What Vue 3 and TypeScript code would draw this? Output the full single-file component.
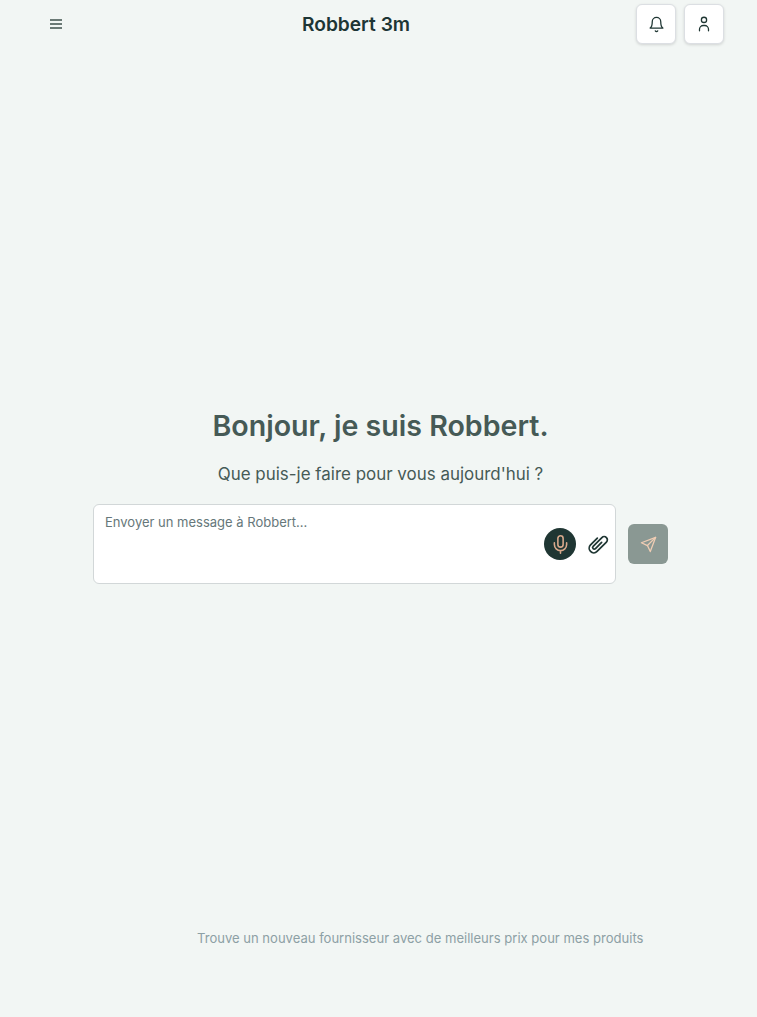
<script setup lang="ts">
defineOptions({
  name: 'ChatHome',
})

const title = 'Robbert 3m'
const suggestion = 'Trouve un nouveau fournisseur avec de meilleurs prix pour mes produits'
</script>

<template>
  <div class="page">
    <header class="topbar">
      <button class="menu-btn" type="button" aria-label="Menu">
        <svg width="16" height="16" viewBox="0 0 16 16" fill="none" stroke="#6b7a76" stroke-width="2">
          <path d="M2 4h12M2 8h12M2 12h12" />
        </svg>
      </button>
      <h1 class="brand">{{ title }}</h1>
      <div class="actions">
        <button class="icon-btn" type="button" aria-label="Notifications">
          <svg width="17" height="17" viewBox="0 0 24 24" fill="none" stroke="#1f3633" stroke-width="1.8" stroke-linecap="round" stroke-linejoin="round">
            <path d="M6 8a6 6 0 0 1 12 0c0 7 3 9 3 9H3s3-2 3-9" />
            <path d="M10.3 21a2 2 0 0 0 3.4 0" />
          </svg>
        </button>
        <button class="icon-btn" type="button" aria-label="Compte">
          <svg width="18" height="18" viewBox="0 0 24 24" fill="none" stroke="#1f3633" stroke-width="1.7" stroke-linecap="round" stroke-linejoin="round">
            <circle cx="12" cy="6.5" r="3.5" />
            <path d="M6 21v-2a5 5 0 0 1 5-5h2a5 5 0 0 1 5 5v2" />
          </svg>
        </button>
      </div>
    </header>

    <main class="hero">
      <h2 class="hello">Bonjour, je suis Robbert.</h2>
      <p class="sub">Que puis-je faire pour vous aujourd'hui ?</p>
      <div class="composer">
        <div class="input-box">
          <span class="placeholder">Envoyer un message à Robbert...</span>
          <div class="input-tools">
            <button class="mic-btn" type="button" aria-label="Micro">
              <svg width="21" height="21" viewBox="0 0 24 24" fill="none" stroke="#d9a98c" stroke-width="1.8" stroke-linecap="round" stroke-linejoin="round">
                <rect x="9" y="2" width="6" height="13" rx="3" />
                <path d="M19 10v2a7 7 0 0 1-14 0v-2M12 19v3" />
              </svg>
            </button>
            <button class="clip-btn" type="button" aria-label="Joindre">
              <svg width="22" height="22" viewBox="0 0 24 24" fill="none" stroke="#1f3633" stroke-width="1.9" stroke-linecap="round" stroke-linejoin="round">
                <path transform="rotate(45 12 12)" d="M7 8V18.5a5 5 0 0 0 10 0V4a3.5 3.5 0 0 0-7 0V17.5a1.8 1.8 0 0 0 3.6 0V8" />
              </svg>
            </button>
          </div>
        </div>
        <button class="send-btn" type="button" aria-label="Envoyer">
          <svg width="17" height="17" viewBox="0 0 24 24" fill="none" stroke="#f0cdb4" stroke-width="1.8" stroke-linecap="round" stroke-linejoin="round">
            <path d="M22 2 2 9.5l8.5 4L14.5 22 22 2Z" />
            <path d="M22 2 10.5 13.5" />
          </svg>
        </button>
      </div>
    </main>

    <p class="suggestion">{{ suggestion }}</p>
  </div>
</template>

<style scoped>
.page {
  display: flex;
  flex-direction: column;
  box-sizing: border-box;
  height: 1017px;
  overflow: hidden;
  background: #f2f6f4;
  color: #1f3633;
  font-family: Inter, 'Noto Sans', sans-serif;
}

button {
  border: 0;
  padding: 0;
  background: transparent;
  cursor: pointer;
}

.topbar {
  display: flex;
  align-items: center;
  justify-content: space-between;
  height: 48px;
  padding: 0 33px 0 48px;
  position: relative;
}

.menu-btn {
  display: flex;
}

.brand {
  position: absolute;
  left: 302px;
  top: 12px;
  margin: 0;
  font-size: 19.15px;
  line-height: 25px;
  font-weight: 600;
  color: #1d3535;
}

.actions {
  display: flex;
  gap: 8px;
}

.icon-btn {
  display: flex;
  align-items: center;
  justify-content: center;
  width: 40px;
  height: 40px;
  border: 1px solid #dcdfe3;
  border-radius: 6px;
  background: #fff;
  box-shadow: 0 1px 3px rgb(0 0 0 / 14%);
}

.hero {
  display: flex;
  flex-direction: column;
  align-items: center;
  padding: 360px 0 0 4px;
}

.hello {
  margin: 0;
  font-size: 28.6px;
  line-height: 36px;
  font-weight: 600;
  color: #465a56;
}

.sub {
  margin: 18px 0 0;
  font-size: 16.95px;
  line-height: 24px;
  color: #465a56;
}

.composer {
  display: flex;
  align-items: center;
  gap: 12px;
  margin-top: 18px;
  margin-left: -4px;
  padding-left: 4px;
}

.input-box {
  position: relative;
  box-sizing: border-box;
  width: 523px;
  height: 80px;
  padding: 8px 11px;
  border: 1px solid #d2d7d8;
  border-radius: 6px;
  background: #fff;
  font-size: 13px;
  line-height: 18px;
  color: #66777a;
}

.input-tools {
  position: absolute;
  right: 6px;
  bottom: 23px;
  display: flex;
  align-items: center;
  gap: 11px;
}

.mic-btn {
  display: flex;
  align-items: center;
  justify-content: center;
  width: 32px;
  height: 32px;
  border-radius: 50%;
  background: #1f3633;
}

.clip-btn {
  display: flex;
}

.send-btn {
  display: flex;
  align-items: center;
  justify-content: center;
  width: 40px;
  height: 40px;
  border-radius: 6px;
  background: #8a9893;
}

.suggestion {
  margin: 345px 0 0 197px;
  font-size: 13.05px;
  line-height: 18px;
  color: #8da0a5;
}
</style>
